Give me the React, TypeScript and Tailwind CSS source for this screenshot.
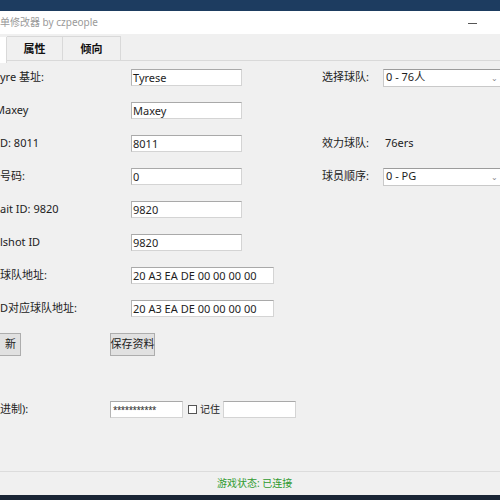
import React from "react";

const font = { fontFamily: '"Noto Sans", "Noto Sans CJK SC", sans-serif' };

function TextBox({ value, wide = false }: { value: string; wide?: boolean }) {
  return (
    <div
      className={`h-[17px] shrink-0 bg-white border border-[#d4d4d4] border-t-[#a9a9a9] border-l-[#b4b4b4] flex items-center pl-[1px] text-[11px] text-[#1e1e1e] leading-none ${
        wide ? "w-[143px]" : "w-[111px]"
      }`}
    >
      {value}
    </div>
  );
}

function Select({ value }: { value: string }) {
  return (
    <div className="h-[18px] w-[120px] shrink-0 bg-white border border-[#c9c9c9] border-t-[#9c9c9c] flex items-center pl-[2px] text-[11px] text-[#1e1e1e] relative">
      {value}
      <span className="absolute right-[4px] top-[2px] text-[8px] text-[#888]">⌄</span>
    </div>
  );
}

type Row = { label: string; value: string; wide?: boolean; shift?: boolean; right?: React.ReactNode };

const rows: Row[] = [
  {
    label: "yre 基址:",
    value: "Tyrese",
    right: (
      <>
        <span className="w-[61px] shrink-0">选择球队:</span>
        <Select value="0 - 76人" />
      </>
    ),
  },
  { label: "Maxey", value: "Maxey", shift: true },
  {
    label: "D: 8011",
    value: "8011",
    right: (
      <>
        <span className="w-[63px] shrink-0">效力球队:</span>
        <span>76ers</span>
      </>
    ),
  },
  {
    label: "号码:",
    value: "0",
    right: (
      <>
        <span className="w-[61px] shrink-0">球员顺序:</span>
        <Select value="0 - PG" />
      </>
    ),
  },
  { label: "ait ID: 9820", value: "9820" },
  { label: "lshot ID", value: "9820" },
  { label: "球队地址:", value: "20 A3 EA DE 00 00 00 00", wide: true },
  { label: "D对应球队地址:", value: "20 A3 EA DE 00 00 00 00", wide: true },
];

export default function App() {
  return (
    <div className="w-[500px] h-[500px] overflow-hidden flex flex-col bg-[#f0f0f0] text-[11px] text-[#222]" style={font}>
      {/* desktop behind */}
      <div className="h-[11px] shrink-0 bg-[#1d3c60]" />

      {/* title bar */}
      <div className="h-[23px] shrink-0 bg-white flex items-center justify-between pr-[23px]">
        <span className="text-[#9a9a9a] text-[10px]">单修改器 by czpeople</span>
        <span className="w-[9px] h-[1px] bg-[#555] mt-[1px]" />
      </div>

      {/* tabs */}
      <div className="h-[27px] shrink-0 flex items-end relative">
        <div className="absolute left-[7px] right-0 bottom-0 h-px bg-[#d9d9d9]" />
        <div className="w-[7px] h-[26px] bg-white border-r border-[#d9d9d9] relative z-10 translate-y-[2px]" />
        <div className="w-[56px] h-[25px] border-t border-r border-[#d9d9d9] flex items-center justify-center font-bold text-[11px] text-[#111]">
          属性
        </div>
        <div className="w-[58px] h-[25px] border-t border-r border-[#d9d9d9] flex items-center justify-center font-bold text-[11px] text-[#111]">
          倾向
        </div>
      </div>

      {/* content */}
      <div className="flex-1 flex flex-col pt-[8px]">
        <div className="flex flex-col gap-[16px]">
          {rows.map((r, i) => (
            <div key={i} className="h-[17px] flex items-center">
              <div className="w-[131px] shrink-0 overflow-hidden whitespace-nowrap">
                <span className={r.shift ? "inline-block -ml-[5px]" : ""}>{r.label}</span>
              </div>
              <TextBox value={r.value} wide={r.wide} />
              {r.right ? <div className="flex items-center ml-[80px] shrink-0">{r.right}</div> : null}
            </div>
          ))}
        </div>

        {/* buttons */}
        <div className="flex items-center mt-[16px] h-[23px]">
          <div className="w-[21px] h-[23px] shrink-0 bg-[#e1e1e1] border border-[#adadad] border-l-0 flex items-center justify-end pr-[4px]">
            新
          </div>
          <div className="ml-[89px] w-[45px] h-[23px] shrink-0 whitespace-nowrap bg-[#e1e1e1] border border-[#adadad] flex items-center justify-center">
            保存资料
          </div>
        </div>

        {/* password row */}
        <div className="flex items-center mt-[45px] h-[17px]">
          <span className="w-[110px] shrink-0">进制):</span>
          <div className="w-[73px] h-[17px] shrink-0 bg-white border border-[#d4d4d4] border-t-[#a9a9a9] border-l-[#b4b4b4] flex items-center pl-[2px] text-[8px] leading-none tracking-[-0.5px]">
            ***********
          </div>
          <div className="ml-[5px] w-[9px] h-[9px] shrink-0 border border-[#555] bg-white" />
          <span className="ml-[3px] text-[10px]">记住</span>
          <div className="ml-[3px] w-[73px] h-[17px] shrink-0 bg-white border border-[#d4d4d4] border-t-[#a9a9a9]" />
        </div>
      </div>

      {/* status bar */}
      <div className="h-[24px] shrink-0 border-t border-[#dcdcdc] flex items-center">
        <span className="ml-[217px] text-[#2f9a2f] text-[10px]">游戏状态: 已连接</span>
      </div>

      <div className="h-[5px] shrink-0 bg-[#1a2535]" />
    </div>
  );
}
